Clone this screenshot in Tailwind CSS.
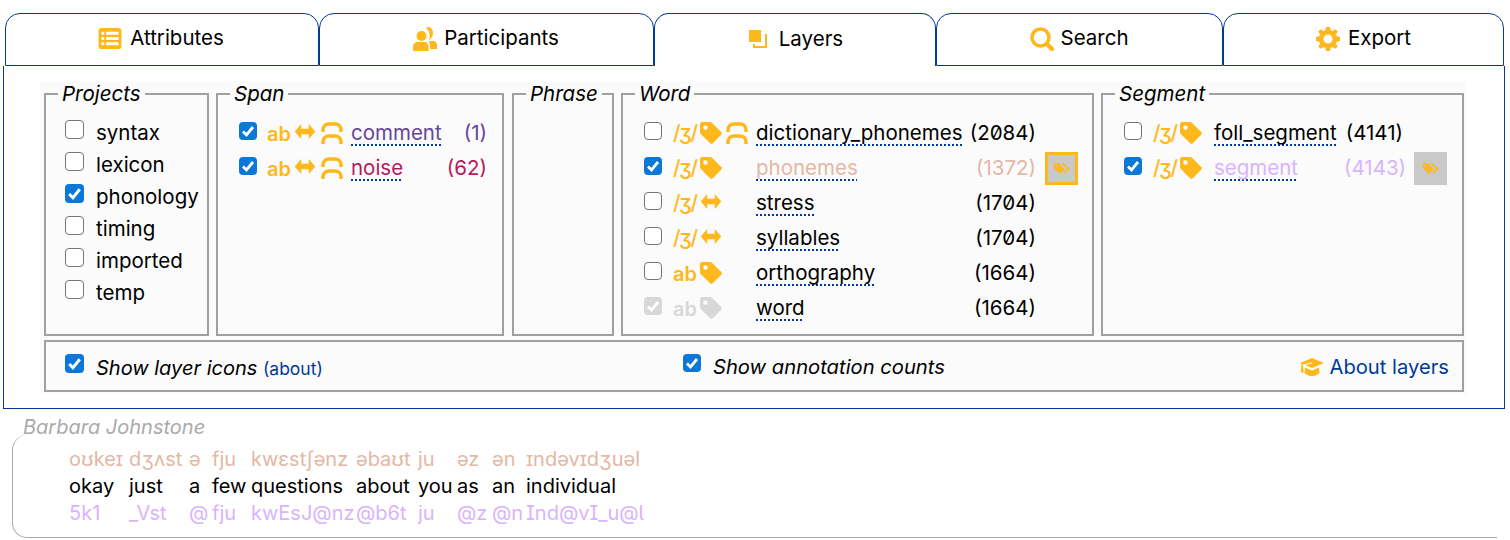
<!DOCTYPE html>
<html lang="en">
<head>
  <meta charset="UTF-8" />
  <title>Layers</title>
  <script src="https://cdn.jsdelivr.net/npm/@tailwindcss/browser@4"></script>
</head>
<body class="bg-white font-['Inter',sans-serif] text-[20.5px] text-black overflow-hidden">

  <svg class="hidden">
    <symbol id="tag" viewBox="0 0 24 24"><path fill-rule="evenodd" d="M2.500 0H11c.8 0 1.500.3 2 .8l10.200 10.200c.8.8.8 2 0 2.800l-9.400 9.400c-.8.8-2 .8-2.800 0L.8 13C.3 12.500 0 11.800 0 11V2.500C0 1.100 1.100 0 2.500 0ZM6 3.500a2.500 2.500 0 1 0 0 5 2.500 2.500 0 0 0 0-5Z"/></symbol>
    <symbol id="arrows" viewBox="0 0 22 16"><path d="M7 0 0 8l7 8v-5h8v5l7-8-7-8v5H7Z"/></symbol>
    <symbol id="arch" viewBox="0 0 22 22"><path fill="none" stroke="currentColor" stroke-width="3.500" d="M2 10V8C2 4.500 4.500 2 8 2h6c3.500 0 6 2.500 6 6v2M2 22v-2c0-3.500 2.500-6 6-6h6c3.500 0 6 2.500 6 6v2"/></symbol>
    <symbol id="tags" viewBox="0 0 26 18"><path fill-rule="evenodd" d="M1 3.500V8l8 8c.6.6 1.400.6 2 0l5-5c.6-.6.600-1.400 0-2L8 1H3.500C2 1 1 2 1 3.500ZM5 3.500a1.500 1.500 0 1 0 0 3 1.500 1.500 0 0 0 0-3Z"/><path d="M12 1h3l9 8.500-7 7-2-1.500 5.500-5.500Z"/></symbol>
  </svg>

  <!-- tabs -->
  <div class="flex ml-[5px] mt-[13px] h-[53px]">
    <div class="w-[314px] flex items-center justify-center gap-2 pb-[2px] pr-[2px] border border-[#003a96] rounded-t-[15px]">
      <svg class="w-[24px] h-[21px] text-[#ffb81c]" viewBox="0 0 24 22" fill="currentColor"><path fill-rule="evenodd" d="M3 0h18c1.700 0 3 1.300 3 3v16c0 1.700-1.300 3-3 3H3c-1.700 0-3-1.300-3-3V3c0-1.700 1.300-3 3-3ZM3 4v3h3V4H3Zm5 0v3h13V4H8ZM3 9.500v3h3v-3H3Zm5 0v3h13v-3H8ZM3 15v3h3v-3H3Zm5 0v3h13v-3H8Z"/></svg>
      <span>Attributes</span>
    </div>
    <div class="w-[335px] flex items-center justify-center gap-[7px] pb-[2px] pr-[1px] border border-[#003a96] rounded-t-[15px]">
      <svg class="w-[24px] h-[24px] text-[#ffb81c]" viewBox="0 0 24 24" fill="currentColor"><circle cx="8.500" cy="9" r="5"/><path d="M15 0c3 0 5 2.500 5 6s-2 6-4.500 7c1-1.500 1.500-3.500 1-6S15 2.500 13 1c.5-.5 1.200-1 2-1ZM0 24v-4c0-3 2-5 5-5h7c2 0 3.500 2 3.500 5v4H0ZM17 14h3c2.500 0 4 2 4 4v4h-7v-3c0-2-.5-3.500-1.500-4.500L17 14Z"/></svg>
      <span>Participants</span>
    </div>
    <div class="w-[282px] flex items-center justify-center gap-3 pb-[2px] pl-[2px] border-x border-t border-[#003a96] rounded-t-[15px]">
      <svg class="w-[18px] h-[18px] text-[#ffb81c]" viewBox="0 0 18 18" fill="currentColor"><path d="M0 0h12v12H0ZM14 4h4v14H4v-4h2v2h10V4h-2Z"/></svg>
      <span>Layers</span>
    </div>
    <div class="w-[287px] flex items-center justify-center gap-[6px] pb-[2px] border border-[#003a96] rounded-t-[15px]">
      <svg class="w-[24px] h-[24px] text-[#ffb81c]" viewBox="0 0 24 24" fill="none" stroke="currentColor"><circle cx="10.500" cy="10.500" r="8.500" stroke-width="3.500"/><path d="m17 17 5 5" stroke-width="4.500" stroke-linecap="round"/></svg>
      <span>Search</span>
    </div>
    <div class="w-[281px] flex items-center justify-center gap-2 pb-[2px] border border-[#003a96] rounded-t-[15px]">
      <svg class="w-[24px] h-[24px] text-[#ffb81c]" viewBox="0 0 24 24" fill="currentColor"><path fill-rule="evenodd" d="M10 0h4l.7 3.300 1.900.8L19.400 2.200l2.400 2.400-1.900 2.800.8 1.900L24 10v4l-3.300.7-.8 1.900 1.900 2.800-2.400 2.400-2.800-1.900-1.900.8L14 24h-4l-.7-3.300-1.900-.8-2.800 1.900-2.400-2.400 1.900-2.800-.8-1.900L0 14v-4l3.300-.7.8-1.900-1.900-2.800 2.400-2.400 2.800 1.900 1.900-.8L10 0Zm2 7.500a4.500 4.500 0 1 0 0 9 4.500 4.500 0 0 0 0-9Z"/></svg>
      <span>Export</span>
    </div>
  </div>

  <!-- layers panel -->
  <div class="ml-[3px] w-[1502px] h-[343px] border-x border-b border-[#003a96] pt-[15px] pl-[36px]">
    <div class="w-[1427px] h-[314px] bg-[#fbfbfb] pl-[4px] pr-[3px]">
      <div class="flex gap-[7px] h-[255px]">

        <fieldset class="w-[165px] border-2 border-[#a0a0a0]">
          <legend class="ml-[12px] px-1 italic leading-[26px]">Projects</legend>
          <div class="pt-[10px] pl-[19px]">
            <label class="flex items-center h-[32px] gap-3"><input type="checkbox" class="appearance-none size-[19px] mb-[8px] bg-white border-[1.5px] border-[#767676] rounded-[4px]" /><span>syntax</span></label>
            <label class="flex items-center h-[32px] gap-3"><input type="checkbox" class="appearance-none size-[19px] mb-[8px] bg-white border-[1.5px] border-[#767676] rounded-[4px]" /><span>lexicon</span></label>
            <label class="flex items-center h-[32px] gap-3"><input type="checkbox" checked class="appearance-none size-[19px] mb-[8px] rounded-[4px] bg-[#0b78d7] bg-[url(data:image/svg+xml,%3Csvg%20xmlns=%27http://www.w3.org/2000/svg%27%20viewBox=%270%200%2018%2018%27%3E%3Cpath%20d=%27M4%209.500l3.500%203.500L14%205%27%20fill=%27none%27%20stroke=%27white%27%20stroke-width=%272.800%27/%3E%3C/svg%3E)]" /><span>phonology</span></label>
            <label class="flex items-center h-[32px] gap-3"><input type="checkbox" class="appearance-none size-[19px] mb-[8px] bg-white border-[1.5px] border-[#767676] rounded-[4px]" /><span>timing</span></label>
            <label class="flex items-center h-[32px] gap-3"><input type="checkbox" class="appearance-none size-[19px] mb-[8px] bg-white border-[1.5px] border-[#767676] rounded-[4px]" /><span>imported</span></label>
            <label class="flex items-center h-[32px] gap-3"><input type="checkbox" class="appearance-none size-[19px] mb-[8px] bg-white border-[1.5px] border-[#767676] rounded-[4px]" /><span>temp</span></label>
          </div>
        </fieldset>

        <fieldset class="w-[288px] border-2 border-[#a0a0a0]">
          <legend class="ml-[12px] px-1 italic leading-[26px]">Span</legend>
          <div class="pt-[9px] pl-[21px] pr-[15px]">
            <div class="flex items-center h-[35px]">
              <input type="checkbox" checked class="appearance-none size-[18px] mb-[6px] rounded-[4px] bg-[#0b78d7] bg-[url(data:image/svg+xml,%3Csvg%20xmlns=%27http://www.w3.org/2000/svg%27%20viewBox=%270%200%2018%2018%27%3E%3Cpath%20d=%27M4%209.500l3.500%203.500L14%205%27%20fill=%27none%27%20stroke=%27white%27%20stroke-width=%272.800%27/%3E%3C/svg%3E)]" />
              <span class="w-[27px] ml-[10px] text-[#ffb81c] font-semibold text-[20px]">ab</span>
              <svg class="w-[22px] h-[15px] mb-[4px] text-[#ffb81c]" fill="currentColor"><use href="#arrows" /></svg>
              <svg class="w-[22px] h-[22px] ml-[5px] mb-[2px] text-[#ffb81c]"><use href="#arch" /></svg>
              <span class="ml-[8px] flex-1 text-[#66459a] underline decoration-dotted decoration-[#003a96] decoration-2 underline-offset-4">comment</span>
              <span class="text-[#66459a]">(1)</span>
            </div>
            <div class="flex items-center h-[35px]">
              <input type="checkbox" checked class="appearance-none size-[18px] mb-[6px] rounded-[4px] bg-[#0b78d7] bg-[url(data:image/svg+xml,%3Csvg%20xmlns=%27http://www.w3.org/2000/svg%27%20viewBox=%270%200%2018%2018%27%3E%3Cpath%20d=%27M4%209.500l3.500%203.500L14%205%27%20fill=%27none%27%20stroke=%27white%27%20stroke-width=%272.800%27/%3E%3C/svg%3E)]" />
              <span class="w-[27px] ml-[10px] text-[#ffb81c] font-semibold text-[20px]">ab</span>
              <svg class="w-[22px] h-[15px] mb-[4px] text-[#ffb81c]" fill="currentColor"><use href="#arrows" /></svg>
              <svg class="w-[22px] h-[22px] ml-[5px] mb-[2px] text-[#ffb81c]"><use href="#arch" /></svg>
              <span class="ml-[8px] flex-1 text-[#b5195f] underline decoration-dotted decoration-[#003a96] decoration-2 underline-offset-4">noise</span>
              <span class="text-[#b5195f]">(62)</span>
            </div>
          </div>
        </fieldset>

        <fieldset class="ml-[1px] w-[102px] border-2 border-[#a0a0a0]">
          <legend class="ml-[12px] px-1 italic leading-[26px]">Phrase</legend>
        </fieldset>

        <fieldset class="w-[473px] border-2 border-[#a0a0a0]">
          <legend class="ml-[12px] px-1 italic leading-[26px]">Word</legend>
          <div class="pt-[9px] pl-[21px]">
            <div class="flex items-center h-[35px]">
              <input type="checkbox" class="appearance-none size-[18px] mb-[6px] bg-white border-[1.5px] border-[#767676] rounded-[4px]" />
              <span class="w-[27px] ml-[11px] whitespace-nowrap tracking-[-1.5px] text-[#ffb81c] font-medium">/ʒ/</span>
              <svg class="w-[22px] h-[22px] mb-[2px] text-[#ffb81c]" fill="currentColor"><use href="#tag" /></svg>
              <svg class="w-[22px] h-[22px] ml-[4px] mb-[2px] text-[#ffb81c]"><use href="#arch" /></svg>
              <span class="ml-[8px] w-[205px] underline decoration-dotted decoration-[#003a96] decoration-2 underline-offset-4">dictionary_phonemes</span>
              <span class="w-[75px] text-right slashed-zero">(2084)</span>
            </div>
            <div class="flex items-center h-[35px]">
              <input type="checkbox" checked class="appearance-none size-[18px] mb-[6px] rounded-[4px] bg-[#0b78d7] bg-[url(data:image/svg+xml,%3Csvg%20xmlns=%27http://www.w3.org/2000/svg%27%20viewBox=%270%200%2018%2018%27%3E%3Cpath%20d=%27M4%209.500l3.500%203.500L14%205%27%20fill=%27none%27%20stroke=%27white%27%20stroke-width=%272.800%27/%3E%3C/svg%3E)]" />
              <span class="w-[27px] ml-[11px] whitespace-nowrap tracking-[-1.5px] text-[#ffb81c] font-medium">/ʒ/</span>
              <svg class="w-[22px] h-[22px] mb-[2px] text-[#ffb81c]" fill="currentColor"><use href="#tag" /></svg>
              <span class="ml-[34px] w-[205px] text-[#e3b8a4] underline decoration-dotted decoration-[#003a96] decoration-2 underline-offset-4">phonemes</span>
              <span class="w-[75px] text-right text-[#e3b8a4]">(1372)</span>
              <span class="ml-[9px] size-[33px] bg-[#c9c9c9] border-[3px] border-[#ffb81c] flex items-center justify-center"><svg class="w-[18px] h-[13px] text-[#ffb81c]" fill="currentColor"><use href="#tags" /></svg></span>
            </div>
            <div class="flex items-center h-[35px]">
              <input type="checkbox" class="appearance-none size-[18px] mb-[6px] bg-white border-[1.5px] border-[#767676] rounded-[4px]" />
              <span class="w-[27px] ml-[11px] whitespace-nowrap tracking-[-1.5px] text-[#ffb81c] font-medium">/ʒ/</span>
              <svg class="w-[22px] h-[15px] mb-[4px] text-[#ffb81c]" fill="currentColor"><use href="#arrows" /></svg>
              <span class="ml-[34px] w-[205px] underline decoration-dotted decoration-[#003a96] decoration-2 underline-offset-4">stress</span>
              <span class="w-[75px] text-right slashed-zero">(1704)</span>
            </div>
            <div class="flex items-center h-[35px]">
              <input type="checkbox" class="appearance-none size-[18px] mb-[6px] bg-white border-[1.5px] border-[#767676] rounded-[4px]" />
              <span class="w-[27px] ml-[11px] whitespace-nowrap tracking-[-1.5px] text-[#ffb81c] font-medium">/ʒ/</span>
              <svg class="w-[22px] h-[15px] mb-[4px] text-[#ffb81c]" fill="currentColor"><use href="#arrows" /></svg>
              <span class="ml-[34px] w-[205px] underline decoration-dotted decoration-[#003a96] decoration-2 underline-offset-4">syllables</span>
              <span class="w-[75px] text-right slashed-zero">(1704)</span>
            </div>
            <div class="flex items-center h-[35px]">
              <input type="checkbox" class="appearance-none size-[18px] mb-[6px] bg-white border-[1.5px] border-[#767676] rounded-[4px]" />
              <span class="w-[27px] ml-[11px] text-[#ffb81c] font-semibold text-[20px]">ab</span>
              <svg class="w-[22px] h-[22px] mb-[2px] text-[#ffb81c]" fill="currentColor"><use href="#tag" /></svg>
              <span class="ml-[34px] w-[205px] underline decoration-dotted decoration-[#003a96] decoration-2 underline-offset-4">orthography</span>
              <span class="w-[75px] text-right">(1664)</span>
            </div>
            <div class="flex items-center h-[35px]">
              <input type="checkbox" checked disabled class="appearance-none size-[18px] mb-[6px] rounded-[4px] bg-[#d8d8d8] bg-[url(data:image/svg+xml,%3Csvg%20xmlns=%27http://www.w3.org/2000/svg%27%20viewBox=%270%200%2018%2018%27%3E%3Cpath%20d=%27M4%209.500l3.500%203.500L14%205%27%20fill=%27none%27%20stroke=%27white%27%20stroke-width=%272.800%27/%3E%3C/svg%3E)]" />
              <span class="w-[27px] ml-[11px] text-[#d8d8d8] font-semibold text-[20px]">ab</span>
              <svg class="w-[22px] h-[22px] mb-[2px] text-[#d8d8d8]" fill="currentColor"><use href="#tag" /></svg>
              <span class="ml-[34px] w-[205px] underline decoration-dotted decoration-[#003a96] decoration-2 underline-offset-4">word</span>
              <span class="w-[75px] text-right">(1664)</span>
            </div>
          </div>
        </fieldset>

        <fieldset class="w-[363px] border-2 border-[#a0a0a0]">
          <legend class="ml-[12px] px-1 italic leading-[26px]">Segment</legend>
          <div class="pt-[9px] pl-[21px]">
            <div class="flex items-center h-[35px]">
              <input type="checkbox" class="appearance-none size-[18px] mb-[6px] bg-white border-[1.5px] border-[#767676] rounded-[4px]" />
              <span class="w-[27px] ml-[11px] whitespace-nowrap tracking-[-1.5px] text-[#ffb81c] font-medium">/ʒ/</span>
              <svg class="w-[22px] h-[22px] mb-[2px] text-[#ffb81c]" fill="currentColor"><use href="#tag" /></svg>
              <span class="ml-[12px] w-[130px] underline decoration-dotted decoration-[#003a96] decoration-2 underline-offset-4">foll_segment</span>
              <span class="w-[59px] text-right">(4141)</span>
            </div>
            <div class="flex items-center h-[35px]">
              <input type="checkbox" checked class="appearance-none size-[18px] mb-[6px] rounded-[4px] bg-[#0b78d7] bg-[url(data:image/svg+xml,%3Csvg%20xmlns=%27http://www.w3.org/2000/svg%27%20viewBox=%270%200%2018%2018%27%3E%3Cpath%20d=%27M4%209.500l3.500%203.500L14%205%27%20fill=%27none%27%20stroke=%27white%27%20stroke-width=%272.800%27/%3E%3C/svg%3E)]" />
              <span class="w-[27px] ml-[11px] whitespace-nowrap tracking-[-1.5px] text-[#ffb81c] font-medium">/ʒ/</span>
              <svg class="w-[22px] h-[22px] mb-[2px] text-[#ffb81c]" fill="currentColor"><use href="#tag" /></svg>
              <span class="ml-[12px] w-[130px] text-[#d8b4fe] underline decoration-dotted decoration-[#003a96] decoration-2 underline-offset-4">segment</span>
              <span class="w-[59px] text-right text-[#d8b4fe]">(4143)</span>
              <span class="ml-[11px] size-[33px] bg-[#c9c9c9] flex items-center justify-center"><svg class="w-[18px] h-[13px] text-[#ffb81c]" fill="currentColor"><use href="#tags" /></svg></span>
            </div>
          </div>
        </fieldset>
      </div>

      <div class="mt-[4px] w-[1420px] h-[52px] border-2 border-[#a0a0a0] flex items-center pl-[19px] pr-[13px] pt-[3px] text-[20.2px]">
        <label class="w-[618px] flex items-center gap-3">
          <input type="checkbox" checked class="appearance-none size-[19px] mb-[8px] rounded-[4px] bg-[#0b78d7] bg-[url(data:image/svg+xml,%3Csvg%20xmlns=%27http://www.w3.org/2000/svg%27%20viewBox=%270%200%2018%2018%27%3E%3Cpath%20d=%27M4%209.500l3.500%203.500L14%205%27%20fill=%27none%27%20stroke=%27white%27%20stroke-width=%272.800%27/%3E%3C/svg%3E)]" />
          <span class="italic text-[20px]">Show layer icons <span class="not-italic text-[17.500px] text-[#003a96]">(about)</span></span>
        </label>
        <label class="flex-1 flex items-center gap-3">
          <input type="checkbox" checked class="appearance-none size-[18px] mb-[8px] rounded-[4px] bg-[#0b78d7] bg-[url(data:image/svg+xml,%3Csvg%20xmlns=%27http://www.w3.org/2000/svg%27%20viewBox=%270%200%2018%2018%27%3E%3Cpath%20d=%27M4%209.500l3.500%203.500L14%205%27%20fill=%27none%27%20stroke=%27white%27%20stroke-width=%272.800%27/%3E%3C/svg%3E)]" />
          <span class="italic">Show annotation counts</span>
        </label>
        <span class="flex items-center gap-[5px] text-[#003a96]">
          <svg class="w-[24px] h-[18px] text-[#ffb81c]" viewBox="0 0 24 18" fill="currentColor"><path d="M12 0 24 5l-12 5-7-3 7-1.500V4.500L3 6.500V8l.8 6.500H.6L1.500 8V6L0 5ZM5 9.500l7 3 7-3 .5 5c0 1.500-3.500 3.500-7.500 3.500S4.500 16 4.500 14.500Z"/></svg>
          About layers
        </span>
      </div>
    </div>
  </div>

  <!-- transcript -->
  <div class="text-[20px]">
    <div class="ml-[23px] mt-[6px] italic text-[#aaa] leading-[24px]">Barbara Johnstone</div>
    <div class="ml-[12px] -mt-[4px] w-[1485px] h-[103px] border-l border-b border-[#aaa] rounded-l-[15px] pl-[56px] pt-[11px] flex leading-[27px]">
      <div class="w-[60px] flex flex-col"><span class="text-[#e3b8a4]">oʊkeɪ</span><span>okay</span><span class="text-[#d8b4fe] [font-feature-settings:'ss02']">5k1</span></div>
      <div class="w-[60px] flex flex-col"><span class="text-[#e3b8a4]">dʒʌst</span><span>just</span><span class="text-[#d8b4fe] [font-feature-settings:'ss02']">_Vst</span></div>
      <div class="w-[23px] flex flex-col"><span class="text-[#e3b8a4]">ə</span><span>a</span><span class="text-[#d8b4fe] [font-feature-settings:'ss02']">@</span></div>
      <div class="w-[39px] flex flex-col"><span class="text-[#e3b8a4]">fju</span><span>few</span><span class="text-[#d8b4fe] [font-feature-settings:'ss02']">fju</span></div>
      <div class="w-[105px] flex flex-col"><span class="text-[#e3b8a4]">kwɛstʃənz</span><span>questions</span><span class="text-[#d8b4fe] [font-feature-settings:'ss02']">kwEsJ@nz</span></div>
      <div class="w-[62px] flex flex-col"><span class="text-[#e3b8a4]">əbaʊt</span><span>about</span><span class="text-[#d8b4fe] [font-feature-settings:'ss02']">@b6t</span></div>
      <div class="w-[39px] flex flex-col"><span class="text-[#e3b8a4]">ju</span><span>you</span><span class="text-[#d8b4fe] [font-feature-settings:'ss02']">ju</span></div>
      <div class="w-[35px] flex flex-col"><span class="text-[#e3b8a4]">əz</span><span>as</span><span class="text-[#d8b4fe] [font-feature-settings:'ss02']">@z</span></div>
      <div class="w-[34px] flex flex-col"><span class="text-[#e3b8a4]">ən</span><span>an</span><span class="text-[#d8b4fe] [font-feature-settings:'ss02']">@n</span></div>
      <div class="flex flex-col"><span class="text-[#e3b8a4]">ɪndəvɪdʒuəl</span><span>individual</span><span class="text-[#d8b4fe] [font-feature-settings:'ss02']">Ind@vI_u@l</span></div>
    </div>
  </div>

</body>
</html>
